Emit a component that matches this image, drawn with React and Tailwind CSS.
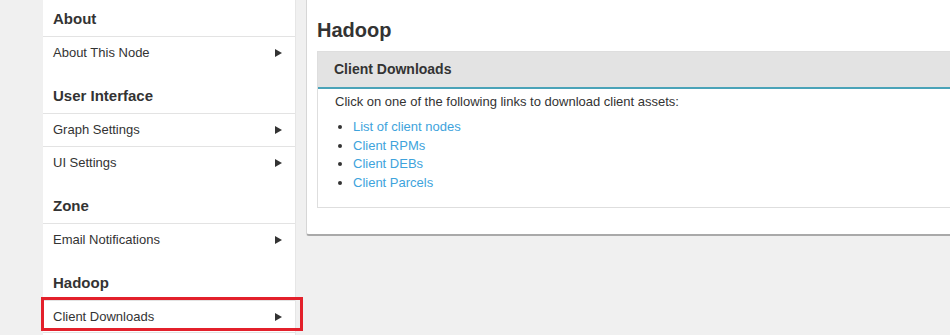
import React from 'react';

const sections = [
  { title: 'About', items: ['About This Node'] },
  { title: 'User Interface', items: ['Graph Settings', 'UI Settings'] },
  { title: 'Zone', items: ['Email Notifications'] },
  { title: 'Hadoop', items: ['Client Downloads'] },
];

const links = ['List of client nodes', 'Client RPMs', 'Client DEBs', 'Client Parcels'];

const Arrow = () => (
  <svg width="7" height="8" viewBox="0 0 7 8" className="shrink-0">
    <path d="M0 0 L7 4 L0 8 Z" fill="#333" />
  </svg>
);

const App = () => {
  return (
    <div
      className="relative flex h-[335px] w-[950px] overflow-hidden bg-[#f0f0f0] pl-[43px] text-[#333]"
      style={{ fontFamily: '"Liberation Sans", Arial, sans-serif' }}
    >
      {/* Sidebar */}
      <aside className="w-[253px] shrink-0 self-stretch border-r border-[#e6e6e6] bg-white">
        {sections.map((section, i) => (
          <div key={section.title}>
            <h3
              className={`${i === 0 ? 'pt-[9px]' : 'pt-[17px]'} pb-[7px] pl-[10px] text-[15px] font-bold leading-[20px]`}
            >
              {section.title}
            </h3>
            {section.items.map((item, j) => (
              <div
                key={item}
                className={`flex h-[33px] items-center justify-between border-t border-[#e3e3e3] pl-[10px] pr-[13px] text-[13px] ${
                  i === sections.length - 1 && j === section.items.length - 1 ? 'border-b' : ''
                }`}
              >
                <span>{item}</span>
                <Arrow />
              </div>
            ))}
          </div>
        ))}
      </aside>

      {/* Main panel */}
      <main className="ml-[10px] flex h-[236px] flex-1 flex-col rounded-bl-[3px] border-b-2 border-l border-[#d6d6d6] border-b-[#a9a9a9] bg-white px-[10px]">
        <h1 className="mt-[18px] mb-[9px] text-[20px] font-bold leading-[24px]">Hadoop</h1>
        <div className="-mr-[10px] border border-r-0 border-[#dedede]">
          <div className="flex h-[37px] items-center border-b-2 border-[#4aa3b8] bg-[#e3e3e3] pl-[16px] text-[14px] font-bold">
            Client Downloads
          </div>
          <div className="pt-[4px] pb-[15px] pl-[17px] text-[13px] leading-[18px]">
            <p>Click on one of the following links to download client assets:</p>
            <ul className="mt-[7px] list-disc pl-[18px] leading-[18.5px] marker:text-[#333]">
              {links.map((link) => (
                <li key={link}>
                  <a href="#" className="text-[#3ea3dc]">
                    {link}
                  </a>
                </li>
              ))}
            </ul>
          </div>
        </div>
      </main>

      {/* Highlight annotation */}
      <div className="pointer-events-none absolute left-[41px] top-[297px] h-[34px] w-[262px] border-[3px] border-[#e3202b]" />
    </div>
  );
};

export default App;
